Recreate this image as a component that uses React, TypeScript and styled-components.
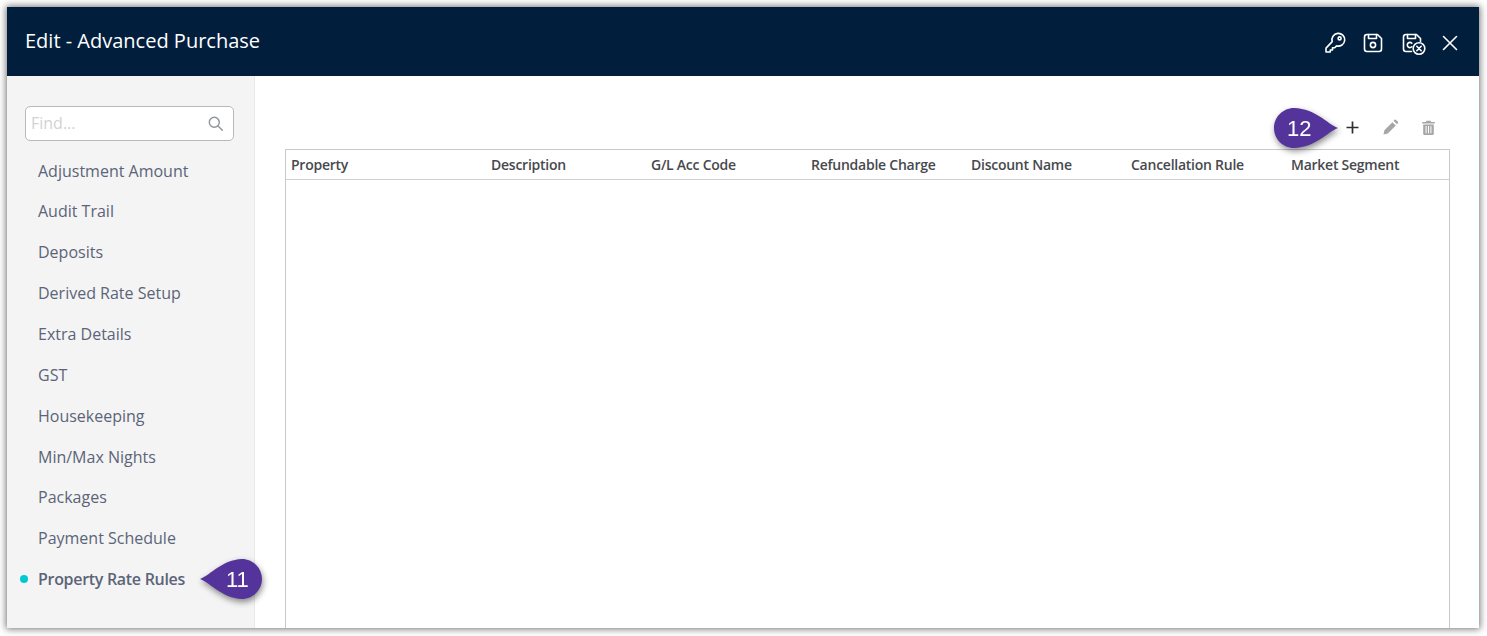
import { createGlobalStyle } from 'styled-components';
import styled from 'styled-components';

const GlobalStyle = createGlobalStyle`
  html, body {
    margin: 0;
    height: 100%;
    background: #fff;
    overflow: hidden;
  }

  body {
    font-family: 'Open Sans', 'Liberation Sans', sans-serif;
  }
`;

const Page = styled.div`
  padding: 7px 8px 8px 7px;
  height: 636px;
  box-sizing: border-box;
`;

const Window = styled.div`
  position: relative;
  display: flex;
  flex-direction: column;
  height: 621px;
  overflow: hidden;
  background: #fff;
  box-shadow: 0 0 7px 1px rgba(0, 0, 0, 0.55);
`;

const WindowFrame = styled.div`
  position: relative;
  height: 621px;
`;

const Header = styled.header`
  display: flex;
  align-items: center;
  justify-content: space-between;
  flex: 0 0 69px;
  padding: 0 19px 0 18px;
  background: #011e3c;
  color: #fff;
`;

const Title = styled.h1`
  margin: 0 0 2px;
  font-size: 20px;
  font-weight: 400;
  line-height: 28px;
`;

const HeaderActions = styled.div`
  display: flex;
  align-items: center;
  gap: 14px;
  padding-top: 2px;
`;

const HeaderIcon = styled.svg<{ $size?: number; $push?: number }>`
  display: block;
  width: ${(props) => props.$size || 24}px;
  height: ${(props) => props.$size || 24}px;
  margin-left: ${(props) => props.$push || 0}px;
  fill: none;
  stroke: #fff;
  stroke-width: 1.6;
  stroke-linecap: round;
  stroke-linejoin: round;
`;

const Body = styled.div`
  display: flex;
  flex: 1;
  min-height: 0;
`;

const Sidebar = styled.aside`
  flex: 0 0 247px;
  box-sizing: border-box;
  padding: 30px 20px 0 18px;
  background: #f4f4f4;
  border-right: 1px solid #e9e9e9;
`;

const Search = styled.div`
  display: flex;
  align-items: center;
  justify-content: space-between;
  box-sizing: border-box;
  width: 209px;
  height: 35px;
  margin-bottom: 9.6px;
  padding: 0 10px 2px 5px;
  background: #fff;
  border: 1px solid #b9b9b9;
  border-radius: 5px;
  color: #d2d2d2;
  font-size: 16px;
`;

const SearchIcon = styled.svg`
  width: 15px;
  height: 15px;
  margin-top: 2px;
  fill: none;
  stroke: #8f9498;
  stroke-width: 1.4;
  stroke-linecap: round;
`;

const NavList = styled.nav`
  display: flex;
  flex-direction: column;
`;

const NavItem = styled.div<{ $active?: boolean }>`
  position: relative;
  height: 40.85px;
  padding-left: 13px;
  line-height: 40px;
  font-size: 16px;
  font-weight: ${(props) => (props.$active ? 600 : 400)};
  letter-spacing: ${(props) => (props.$active ? '-0.3px' : '0')};
  color: #5b6478;
  white-space: nowrap;

  ${(props) =>
    props.$active &&
    `&::before {
      content: '';
      position: absolute;
      left: -5px;
      top: 16px;
      width: 8px;
      height: 8px;
      border-radius: 50%;
      background: #00c8d2;
    }`}
`;

const Content = styled.main`
  display: flex;
  flex: 1;
  flex-direction: column;
  min-width: 0;
  padding: 0 29px 0 30px;
`;

const Toolbar = styled.div`
  display: flex;
  align-items: center;
  justify-content: flex-end;
  gap: 21px;
  flex: 0 0 73px;
  padding: 30px 13px 0 0;
  box-sizing: border-box;
`;

const ToolIcon = styled.svg`
  display: block;
  width: 17px;
  height: 17px;
`;

const Table = styled.div`
  flex: 1;
  border: 1px solid #c9c9c9;
  border-bottom: 0;
`;

const HeaderRow = styled.div`
  display: grid;
  grid-template-columns: 200px repeat(6, 160px);
  height: 29px;
  border-bottom: 1px solid #d2d2d2;
`;

const HeaderCell = styled.div`
  padding-left: 5px;
  line-height: 29px;
  font-size: 14px;
  font-weight: 600;
  letter-spacing: -0.25px;
  color: #47494e;
  white-space: nowrap;
`;

const Callout = styled.svg<{ $left: number; $top: number }>`
  position: absolute;
  left: ${(props) => props.$left}px;
  top: ${(props) => props.$top}px;
  overflow: visible;
  filter: drop-shadow(1px 3px 3px rgba(0, 0, 0, 0.45));
`;

const CalloutText = styled.text`
  font-family: 'Liberation Sans', Arial, sans-serif;
  font-size: 22px;
  fill: #fff;
`;

const navItems = [
  'Adjustment Amount',
  'Audit Trail',
  'Deposits',
  'Derived Rate Setup',
  'Extra Details',
  'GST',
  'Housekeeping',
  'Min/Max Nights',
  'Packages',
  'Payment Schedule',
];

const columns = [
  'Property',
  'Description',
  'G/L Acc Code',
  'Refundable Charge',
  'Discount Name',
  'Cancellation Rule',
  'Market Segment',
];

export default function App() {
  return (
    <>
      <GlobalStyle />
      <Page>
        <WindowFrame>
          <Window>
            <Header>
              <Title>Edit - Advanced Purchase</Title>
              <HeaderActions>
                <HeaderIcon viewBox="0 0 24 24">
                  <path d="M9.2 10.6a6.4 6.4 0 1 1 4.4 4.3l-1.9 1.900h-2.200v2.200H7.300v2H3v-3.900z" />
                  <circle cx="16.600" cy="7.400" r="1.500" />
                </HeaderIcon>
                <HeaderIcon viewBox="0 0 24 24" $size={24}>
                  <path d="M6 3.500h10.500l4 4V18a2.500 2.500 0 0 1-2.500 2.500H6A2.500 2.500 0 0 1 3.500 18V6A2.500 2.500 0 0 1 6 3.500z" />
                  <path d="M7.500 3.500v4h8v-4" />
                  <circle cx="12" cy="14" r="2.600" />
                </HeaderIcon>
                <HeaderIcon viewBox="0 0 26 24" $size={26} $push={1}>
                  <path d="M11.500 20.500H6A2.500 2.500 0 0 1 3.500 18V6A2.500 2.500 0 0 1 6 3.500h10.500l4 4V10.500" />
                  <path d="M7.500 3.500v4h8v-4" />
                  <path d="M11.800 12.200a2.600 2.600 0 1 0 0 3.600" />
                  <circle cx="19" cy="17.500" r="5.800" />
                  <path d="M16.800 15.300l4.400 4.400M21.200 15.300l-4.400 4.400" />
                </HeaderIcon>
                <HeaderIcon viewBox="0 0 20 20" $size={20}>
                  <path d="M3.500 3.500l13 13M16.500 3.500l-13 13" />
                </HeaderIcon>
              </HeaderActions>
            </Header>
            <Body>
              <Sidebar>
                <Search>
                  Find...
                  <SearchIcon viewBox="0 0 15 15">
                    <circle cx="6.300" cy="6.300" r="5" />
                    <path d="M10 10l4.300 4.300" />
                  </SearchIcon>
                </Search>
                <NavList>
                  {navItems.map((item) => (
                    <NavItem key={item}>{item}</NavItem>
                  ))}
                  <NavItem $active>Property Rate Rules</NavItem>
                </NavList>
              </Sidebar>
              <Content>
                <Toolbar>
                  <ToolIcon viewBox="0 0 17 17">
                    <path d="M8.500 2.500v12M2.500 8.500h12" stroke="#2f2f2f" strokeWidth="1.700" />
                  </ToolIcon>
                  <ToolIcon viewBox="0 0 17 17">
                    <path d="M1.500 15.500l.9-4.300 8-8 3.400 3.400-8 8zM11.500 1.800l1-1a1 1 0 0 1 1.400 0l2 2a1 1 0 0 1 0 1.400l-1 1z" fill="#a6a6a6" />
                  </ToolIcon>
                  <ToolIcon viewBox="0 0 17 17">
                    <path
                      d="M2.200 3h3.600l.7-1.300h4l.7 1.300h3.600v1.500H2.200zM3.200 5.500h10.600v9.200a1.300 1.300 0 0 1-1.300 1.300h-8a1.300 1.300 0 0 1-1.300-1.300zM5.600 7v7.300h1V7zm2.400 0v7.300h1V7zm2.400 0v7.300h1V7z"
                      fill="#a6a6a6"
                      fillRule="evenodd"
                    />
                  </ToolIcon>
                </Toolbar>
                <Table>
                  <HeaderRow>
                    {columns.map((column) => (
                      <HeaderCell key={column}>{column}</HeaderCell>
                    ))}
                  </HeaderRow>
                </Table>
              </Content>
            </Body>
          </Window>
          <Callout $left={193} $top={552} width="62" height="40" viewBox="0 0 62 40">
            <path d="M0 20C12 15 22 1 42 0c11 0 20 9 20 20s-9 20-20 20C22 39 12 25 0 20z" fill="#54349a" />
            <CalloutText x="26" y="28">11</CalloutText>
          </Callout>
          <Callout $left={1267} $top={101} width="64" height="40" viewBox="0 0 64 40">
            <path d="M64 20C52 15 42 1 20 0C9 0 0 9 0 20s9 20 20 20C42 39 52 25 64 20z" fill="#54349a" />
            <CalloutText x="13" y="28">12</CalloutText>
          </Callout>
        </WindowFrame>
      </Page>
    </>
  );
}
